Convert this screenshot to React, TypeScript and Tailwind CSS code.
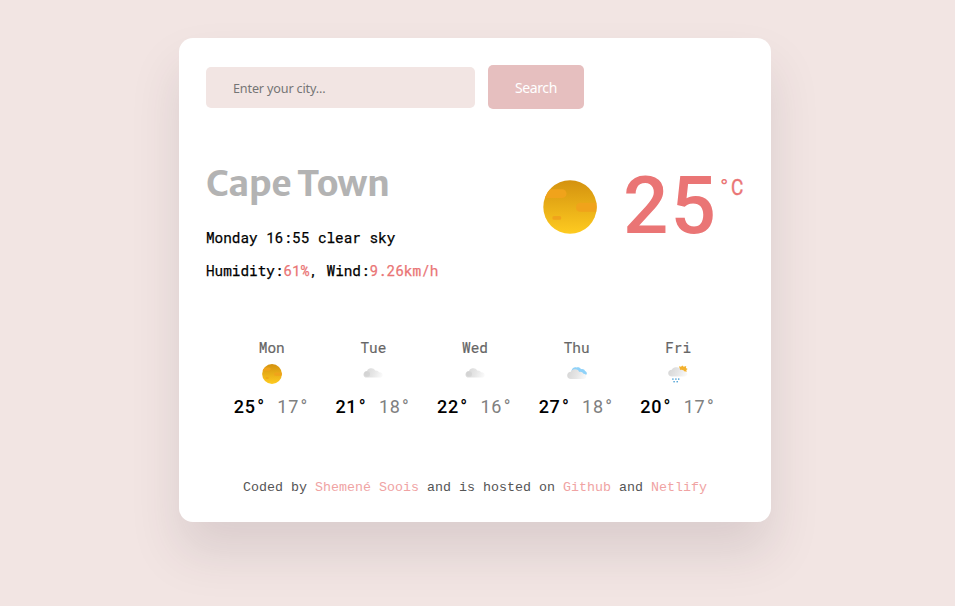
import React from "react";

const MONO = "font-['Roboto_Mono','DejaVu_Sans_Mono',monospace]";
const DIGITS = "font-['Roboto',sans-serif]";

function Sun({ size, id }: { size: number; id: string }) {
  return (
    <svg width={size} height={size} viewBox="0 0 54 54" className="block">
      <defs>
        <linearGradient id={id} x1="0" y1="0" x2="0" y2="1">
          <stop offset="0" stopColor="#d4920f" />
          <stop offset="1" stopColor="#fecb20" />
        </linearGradient>
        <clipPath id={id + "c"}>
          <circle cx="27" cy="27" r="26.7" />
        </clipPath>
      </defs>
      <circle cx="27" cy="27" r="26.7" fill={`url(#${id})`} />
      <g clipPath={`url(#${id}c)`} fill="#f0a31b">
        <rect x="-6" y="9.3" width="29.5" height="8.8" rx="4.4" />
        <rect x="33" y="22.8" width="30" height="9" rx="4.4" />
        <rect x="9.3" y="36" width="9" height="3.8" rx="1.9" />
      </g>
    </svg>
  );
}

const CLOUD =
  "M4.2 13.6 C1.6 13.6 .5 12.2 .5 10.4 C.5 8.4 2 7.1 4 6.9 C4.8 5 6.4 4 8.2 4.2 C9.8 4.1 11.4 4.9 12.1 6.6 C14 6.3 15.4 7 16 8.4 C18 8.2 19.5 9.2 19.5 10.9 C19.5 12.6 18.4 13.6 16.6 13.6 Z";

function CloudFill({ id }: { id: string }) {
  return (
    <defs>
      <linearGradient id={id} x1="0" y1="0.3" x2="1" y2="0.5">
        <stop offset="0" stopColor="#d6d6d6" />
        <stop offset="0.55" stopColor="#e6e6e6" />
        <stop offset="1" stopColor="#f8f8f8" />
      </linearGradient>
    </defs>
  );
}

function Cloud({ id }: { id: string }) {
  return (
    <svg width="20" height="20" viewBox="0 0 20 20" className="block">
      <CloudFill id={id} />
      <path d={CLOUD} fill={`url(#${id})`} />
      <circle cx="4.2" cy="10" r="2.8" fill="#c9c9c9" opacity=".45" />
    </svg>
  );
}

function BlueCloud() {
  return (
    <svg width="20" height="20" viewBox="0 0 20 20" className="block">
      <CloudFill id="bc" />
      <path
        d="M4.5 6.4 C5.5 3.9 7.6 2.8 9.4 3.6 C11 2.8 13 3.4 14 5.2 C16 4.8 17.5 5.6 18 6.9 C19.5 7.4 20 8.6 19.8 10 L18.5 11.6 L5 9.4 Z"
        fill="#8fd2f9"
      />
      <path
        d="M4 15 C1.6 15 .2 13.7 .2 11.6 C.2 9.3 1.8 7.9 3.8 7.8 C4.6 5.8 6.4 5 8 5.3 C10 5.1 11.6 6.3 12.1 7.9 C14 7.5 15.8 8.2 16.5 9.8 C18.5 9.8 19.4 11 19.2 12.4 C18.8 14.2 17.7 15 16 15 Z"
        fill="url(#bc)"
      />
    </svg>
  );
}

function RainCloud() {
  return (
    <svg width="20" height="20" viewBox="0 0 20 20" className="block">
      <CloudFill id="rc" />
      <path
        d="M14.3 1.5 L15.7 2.8 L18.2 2 L17.9 4.1 L19.7 5 L18.3 6 L18.8 7.8 L16.7 7.6 L14.5 8.6 L12.8 7.8 L10.5 6.5 L11.6 4.4 L11 2.2 L13 2.8 Z"
        fill="#f3b12e"
      />
      <path
        d="M4 12.4 C1.6 12.4 .2 11.2 .2 9.2 C.2 7.2 1.8 6 3.8 5.8 C4.6 4 6.4 3 8.2 3.3 C10.2 3 11.8 4.2 12.3 6 C14.2 5.5 15.8 6.3 16.5 7.7 C18.4 7.5 19.4 8.6 19.2 10.2 C19 11.6 17.7 12.4 16 12.4 Z"
        fill="url(#rc)"
      />
      <g fill="#4a9fd4">
        <rect x="4.2" y="14.4" width="1.4" height="1.4" />
        <rect x="7.2" y="14.4" width="1.4" height="1.4" />
        <rect x="10" y="14.4" width="1.4" height="1.4" />
        <rect x="5.4" y="17" width="1.4" height="1.4" />
        <rect x="8.5" y="17" width="1.4" height="1.4" />
      </g>
    </svg>
  );
}

const DAYS = [
  { day: "Mon", icon: <Sun size={20} id="s2" />, max: 25, min: 17 },
  { day: "Tue", icon: <Cloud id="c1" />, max: 21, min: 18 },
  { day: "Wed", icon: <Cloud id="c2" />, max: 22, min: 16 },
  { day: "Thu", icon: <BlueCloud />, max: 27, min: 18 },
  { day: "Fri", icon: <RainCloud />, max: 20, min: 17 },
];

function Temp({ value, className }: { value: number; className: string }) {
  return (
    <span className={`flex ${className}`}>
      <span className="tracking-[0.7px]">{value}</span>
      <span className="w-[10.8px] pr-[1px] text-center">°</span>
    </span>
  );
}

export default function App() {
  return (
    <div className="h-[606px] overflow-hidden bg-[#f2e5e3] pt-[38px] pl-[179px]">
      <main className="flex h-[484px] w-[592px] flex-col rounded-[14px] bg-white px-[27px] pt-[27px] shadow-[0_30px_50px_rgba(65,50,60,0.13)]">
        <form className="flex h-11 items-center gap-[13px] font-['Tahoma','Noto_Sans',sans-serif]">
          <input
            type="text"
            placeholder="Enter your city..."
            className="mt-px h-[41px] w-[269px] rounded-[5px] bg-[#f2e5e3] px-[27px] pt-[2px] text-[12.6px] tracking-[-0.15px] placeholder:text-[#757575]"
          />
          <button
            type="button"
            className="h-11 w-24 rounded-[5px] bg-[#e6bfbf] pt-px text-[14px] tracking-[-0.4px] text-white"
          >
            Search
          </button>
        </form>

        <section className="mt-[51px] flex h-[130px] justify-between">
          <div>
            <h1 className="h-[48px] font-['Merriweather_Sans','Open_Sans',sans-serif] text-[35.5px] leading-[48px] font-bold tracking-[-0.5px] whitespace-nowrap text-[#b3b3b3]">
              Cape Town
            </h1>
            <ul
              className={`mt-[13px] text-[14.35px] leading-[33px] whitespace-nowrap text-black [-webkit-text-stroke:0.25px] ${MONO}`}
            >
              <li>Monday 16:55 clear sky</li>
              <li>
                Humidity:<span className="text-[#ea7575]">61%</span>, Wind:
                <span className="text-[#ea7575]">9.26km/h</span>
              </li>
            </ul>
          </div>
          <div className={`flex text-[#ea7575] ${DIGITS}`}>
            <div className="mt-[20px]">
              <Sun size={54} id="s1" />
            </div>
            <strong className="mt-px ml-[26px] w-[97px] text-[80px] leading-[90px] font-medium tracking-[2px]">
              25
            </strong>
            <span className="mt-[13px] flex h-7 text-[22.5px] leading-7">
              <span className="w-[11px]">°</span>
              <span className="w-[13px] origin-left scale-x-[0.84] [-webkit-text-stroke:0.4px]">
                C
              </span>
            </span>
          </div>
        </section>

        <section className="mx-auto mt-[46px] grid w-[508px] grid-cols-5">
          {DAYS.map((d) => (
            <div key={d.day} className="flex flex-col items-center">
              <div
                className={`text-[14.4px] leading-[23px] text-[#666] [-webkit-text-stroke:0.2px] ${MONO}`}
              >
                {d.day}
              </div>
              <div className="mt-[5px]">{d.icon}</div>
              <div
                className={`mt-[11px] flex gap-[10.8px] text-[18px] leading-6 ${DIGITS}`}
              >
                <Temp value={d.max} className="font-medium text-black" />
                <Temp value={d.min} className="text-[#808080]" />
              </div>
            </div>
          ))}
        </section>

        <footer className="mt-[59px] text-center font-['Courier_New','Liberation_Mono',monospace] text-[13.33px] leading-5 whitespace-nowrap text-[#555]">
          Coded by <a className="text-[#f0a3a3]">Shemené Soois</a> and is hosted
          on <a className="text-[#f0a3a3]">Github</a> and{" "}
          <a className="text-[#f0a3a3]">Netlify</a>
        </footer>
      </main>
    </div>
  );
}
